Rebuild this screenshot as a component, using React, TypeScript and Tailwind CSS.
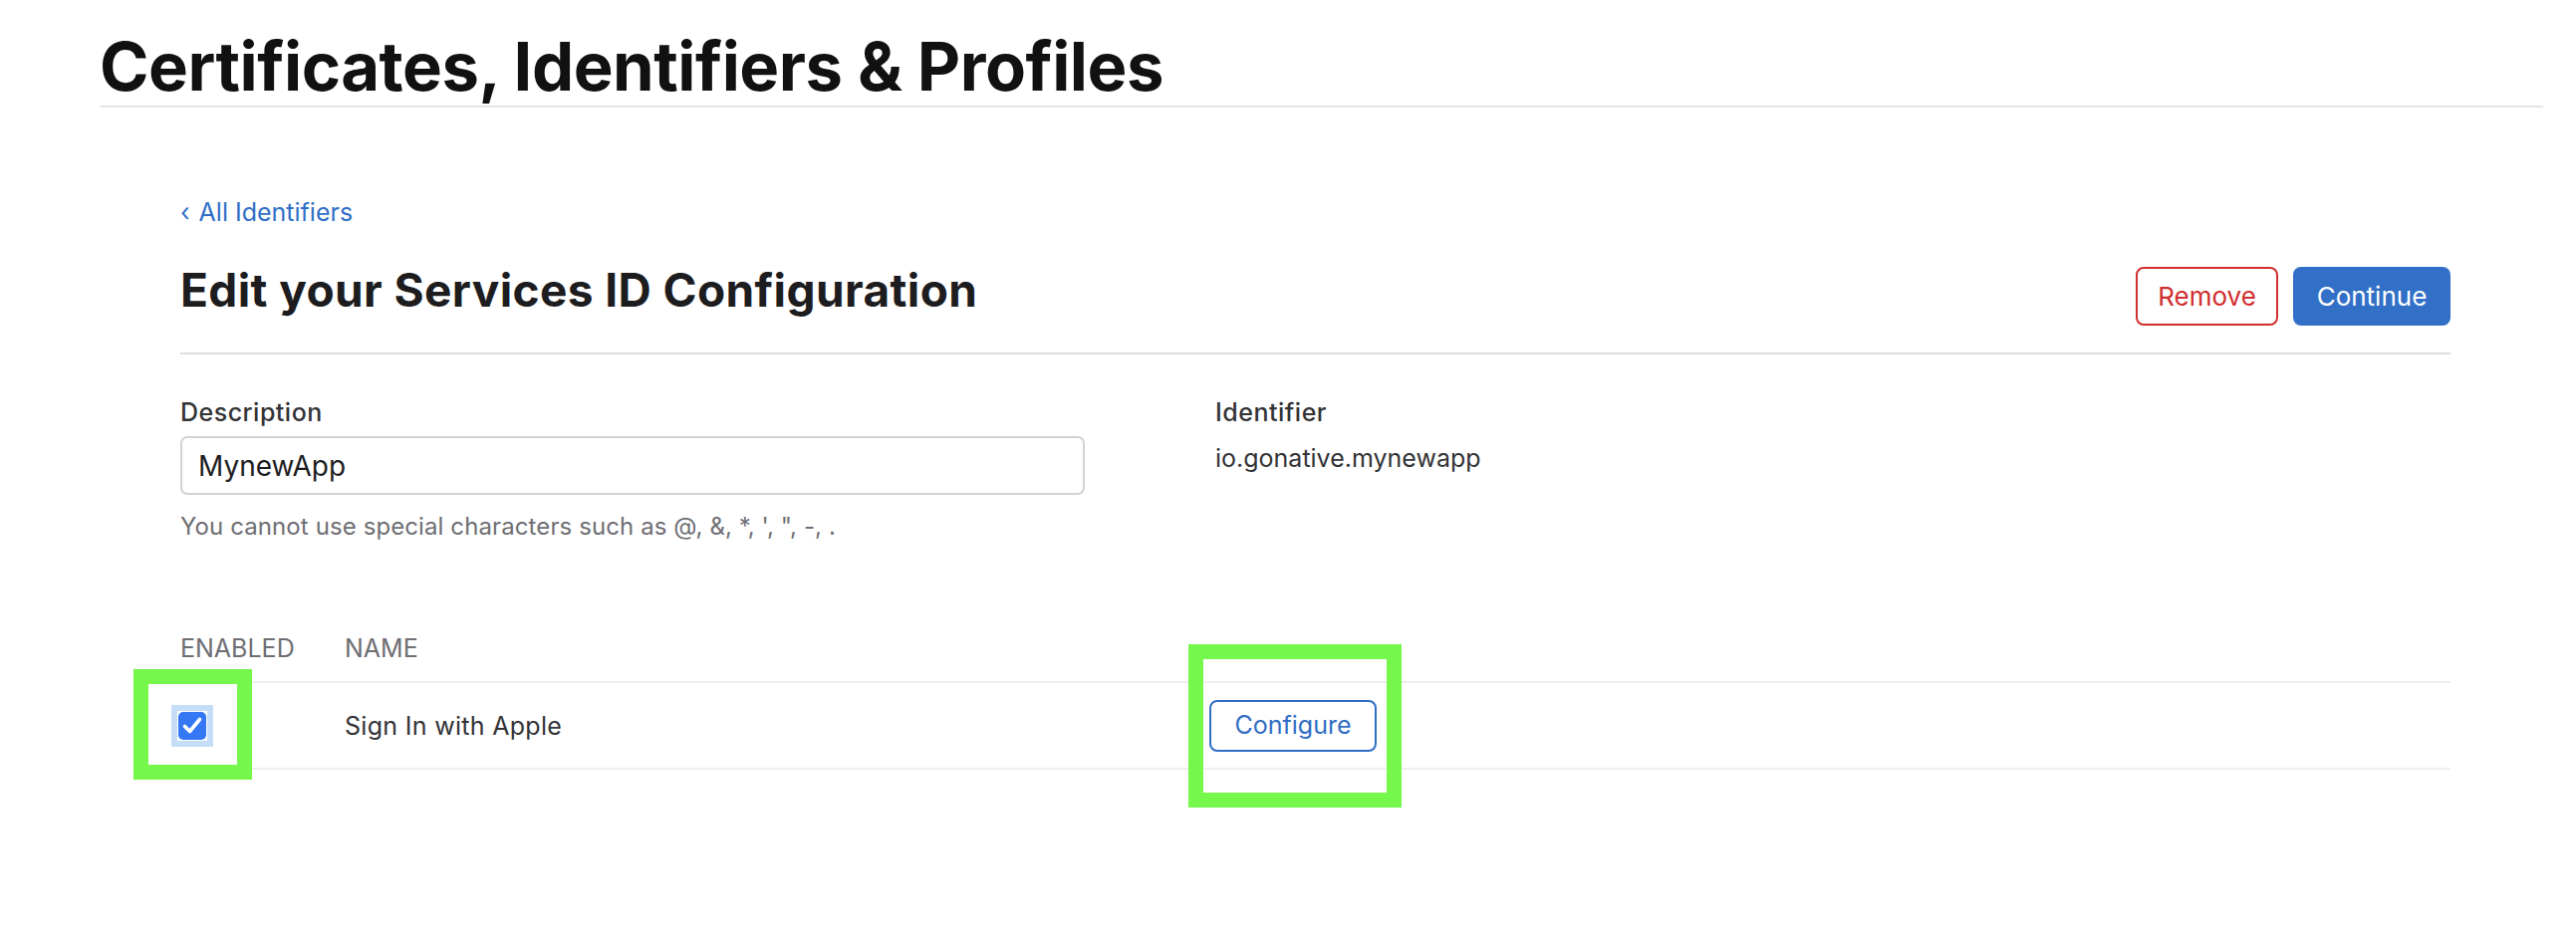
import React from "react";

const font = { fontFamily: "Inter, 'Noto Sans', sans-serif" };

function Checkbox() {
  return (
    <div className="flex h-[42px] w-[42px] items-center justify-center bg-[#c6ddf8] -ml-[9px]">
      <div className="flex h-[30px] w-[30px] items-center justify-center bg-white">
        <div className="flex h-[28px] w-[28px] items-center justify-center rounded-[5px] bg-[#3478f6]">
          <svg width="28" height="28" viewBox="0 0 28 28">
            <path d="M6.5 14.5 L11.5 19.5 L21.5 7.5" fill="none" stroke="#fff" strokeWidth="3.6" strokeLinecap="round" strokeLinejoin="round" />
          </svg>
        </div>
      </div>
    </div>
  );
}

export default function App() {
  return (
    <div className="relative h-[936px] w-[2586px] overflow-hidden bg-white text-[#333336]" style={font}>
      {/* page header */}
      <div className="pl-[100px] pt-[33px]">
        <h1 className="w-[2453px] border-b-2 border-[#e5e5e5] pb-[6px] text-[67px] font-bold leading-[67px] tracking-[-0.5px] text-[#111111]">
          Certificates, Identifiers &amp; Profiles
        </h1>
      </div>

      <div className="ml-[181px] w-[2279px]">
        <a className="mt-[90px] flex items-center text-[25px] leading-[30px] text-[#2f6fc7]">
          <span className="mr-[9px]">‹</span>
          All Identifiers
        </a>

        <div className="mt-[34px] flex items-start justify-between border-b-2 border-[#dedede] pb-[27px]">
          <h2 className="text-[46px] font-bold leading-[58px] tracking-[0.4px] text-[#1d1d1f]">
            Edit your Services ID Configuration
          </h2>
          <div className="mt-[6px] flex gap-[15px]">
            <button className="h-[59px] w-[143px] rounded-[8px] border-2 border-[#d12e2e] text-[26px] text-[#d12e2e]">
              Remove
            </button>
            <button className="h-[59px] w-[158px] rounded-[8px] bg-[#3170c6] text-[26px] text-white">
              Continue
            </button>
          </div>
        </div>

        <div className="mt-[43px] flex">
          <div className="w-[1039px]">
            <label className="block text-[25px] font-medium leading-[30px] tracking-[0.5px] text-[#333336]">Description</label>
            <div className="mt-[9px] flex h-[59px] w-[908px] items-center rounded-[7px] border-2 border-[#d2d2d7] px-[16px] text-[28px] text-[#1d1d1f]">
              MynewApp
            </div>
            <p className="mt-[17px] text-[24px] leading-[30px] tracking-[0.1px] text-[#6e6e73]">
              You cannot use special characters such as @, &amp;, *, ', ", -, .
            </p>
          </div>
          <div>
            <div className="text-[25px] font-medium leading-[30px] tracking-[0.5px] text-[#333336]">Identifier</div>
            <div className="mt-[16px] text-[25px] leading-[30px] text-[#333336]">io.gonative.mynewapp</div>
          </div>
        </div>

        {/* capabilities table */}
        <div className="mt-[92px]">
          <div className="flex border-b-2 border-[#eeeeee] pb-[18px] text-[25px] leading-[30px] text-[#6e6e73]">
            <div className="w-[165px]">ENABLED</div>
            <div>NAME</div>
          </div>
          <div className="flex h-[87px] items-center border-b-2 border-[#eeeeee]">
            <div className="w-[165px]">
              <Checkbox />
            </div>
            <div className="w-[868px] text-[25px] leading-[30px] tracking-[0.3px] text-[#333336]">Sign In with Apple</div>
            <button className="h-[52px] w-[168px] rounded-[8px] border-2 border-[#2f6dc4] text-[25px] text-[#2f6dc4]">
              Configure
            </button>
          </div>
        </div>
      </div>

      {/* annotation boxes */}
      <div className="absolute left-[134px] top-[672px] h-[111px] w-[119px] border-[15px] border-[#75f74c]" />
      <div className="absolute left-[1193px] top-[647px] h-[164px] w-[214px] border-[15px] border-[#75f74c]" />
    </div>
  );
}
